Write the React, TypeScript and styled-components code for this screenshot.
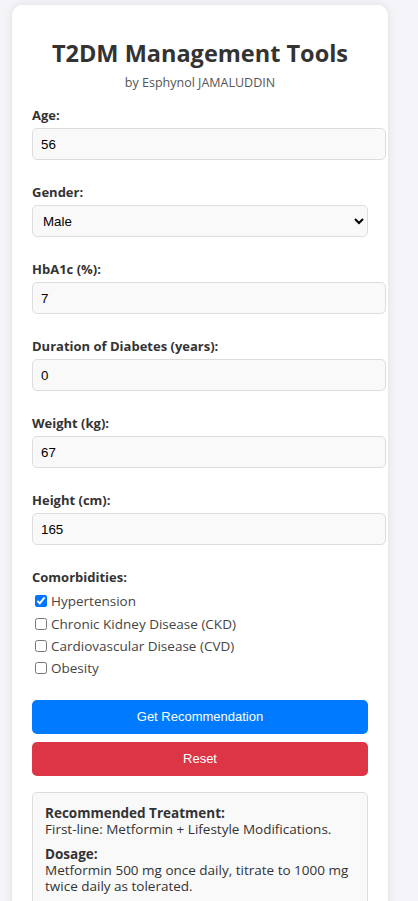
import React, { useState } from "react";
import styled, { createGlobalStyle } from "styled-components";

const GlobalStyle = createGlobalStyle`
  html, body { margin: 0; padding: 0; }
  body {
    background: #f4f4f9;
    font-family: "Open Sans", "Noto Sans", sans-serif;
    color: #333;
  }
  * { box-sizing: content-box; }
`;

const Card = styled.div`
  width: 336px;
  margin: 5px 0 0 12px;
  padding: 20px;
  background: #ffffff;
  border-radius: 10px;
  box-shadow: 0 0 10px rgba(0, 0, 0, 0.1);
`;

const Title = styled.h1`
  margin: 13px 0 7px;
  text-align: center;
  font-size: 23.5px;
  line-height: 30px;
  font-weight: 700;
  color: #333;
`;

const Byline = styled.p`
  margin: 0 0 16px;
  text-align: center;
  font-size: 12.5px;
  line-height: 16px;
  color: #555;
`;

const Group = styled.div<{ $gap?: number }>`
  margin-bottom: ${(p) => p.$gap ?? 24}px;
`;

const Label = styled.label`
  display: block;
  font-size: 13px;
  line-height: 17px;
  font-weight: 700;
  color: #333;
  margin-bottom: 4px;
`;

const Input = styled.input`
  display: block;
  width: 100%;
  height: 14px;
  padding: 8px;
  font-family: "Liberation Sans", Arial, sans-serif;
  font-size: 13.33px;
  color: #000;
  background: #f9f9f9;
  border: 1px solid #ddd;
  border-radius: 5px;
  outline: none;
`;

const Select = styled.select`
  display: block;
  box-sizing: border-box;
  width: 100%;
  height: 32px;
  padding: 0 6px;
  font-family: "Liberation Sans", Arial, sans-serif;
  font-size: 13.33px;
  color: #000;
  background: #f9f9f9;
  border: 1px solid #ddd;
  border-radius: 5px;
  outline: none;
`;

const CheckList = styled.div`
  display: flex;
  flex-direction: column;
`;

const CheckRow = styled.label`
  display: flex;
  align-items: center;
  height: 22.4px;
  font-size: 13.5px;
  color: #444;
`;

const Box = styled.input`
  width: 12px;
  height: 12px;
  margin: 0 4px 0 3px;
`;

const Button = styled.button<{ $variant: "primary" | "danger" }>`
  display: block;
  box-sizing: border-box;
  width: 100%;
  height: 34px;
  margin-bottom: 8px;
  border: none;
  border-radius: 5px;
  color: #fff;
  font-family: "Liberation Sans", Arial, sans-serif;
  font-size: 13px;
  cursor: pointer;
  background: ${(p) => (p.$variant === "primary" ? "#007bff" : "#dc3545")};
`;

const Result = styled.div`
  margin-top: 16px;
  padding: 12px 12px 3px;
  background: #f9f9f9;
  border: 1px solid #ddd;
  border-radius: 5px;
  font-size: 13.5px;
  line-height: 16px;
  color: #333;
`;

const ResultPara = styled.p`
  margin: 0 0 9px;
`;

const ResultHead = styled.strong`
  display: block;
  font-weight: 700;
`;

export default function App() {
  const [age, setAge] = useState("56");
  const [gender, setGender] = useState("Male");
  const [hba1c, setHba1c] = useState("7");
  const [duration, setDuration] = useState("0");
  const [weight, setWeight] = useState("67");
  const [height, setHeight] = useState("165");
  const [comorb, setComorb] = useState<Record<string, boolean>>({
    htn: true,
    ckd: false,
    cvd: false,
    obesity: false,
  });

  const items: [string, string][] = [
    ["htn", "Hypertension"],
    ["ckd", "Chronic Kidney Disease (CKD)"],
    ["cvd", "Cardiovascular Disease (CVD)"],
    ["obesity", "Obesity"],
  ];

  return (
    <>
      <GlobalStyle />
      <Card>
        <Title>T2DM Management Tools</Title>
        <Byline>by Esphynol JAMALUDDIN</Byline>

        <Group>
          <Label>Age:</Label>
          <Input type="number" value={age} onChange={(e) => setAge(e.target.value)} />
        </Group>
        <Group>
          <Label>Gender:</Label>
          <Select value={gender} onChange={(e) => setGender(e.target.value)}>
            <option>Male</option>
            <option>Female</option>
          </Select>
        </Group>
        <Group>
          <Label>HbA1c (%):</Label>
          <Input type="number" value={hba1c} onChange={(e) => setHba1c(e.target.value)} />
        </Group>
        <Group>
          <Label>Duration of Diabetes (years):</Label>
          <Input type="number" value={duration} onChange={(e) => setDuration(e.target.value)} />
        </Group>
        <Group>
          <Label>Weight (kg):</Label>
          <Input type="number" value={weight} onChange={(e) => setWeight(e.target.value)} />
        </Group>
        <Group>
          <Label>Height (cm):</Label>
          <Input type="number" value={height} onChange={(e) => setHeight(e.target.value)} />
        </Group>
        <Group $gap={20}>
          <Label>Comorbidities:</Label>
          <CheckList>
            {items.map(([k, t]) => (
              <CheckRow key={k}>
                <Box
                  type="checkbox"
                  checked={comorb[k]}
                  onChange={() => setComorb({ ...comorb, [k]: !comorb[k] })}
                />
                {t}
              </CheckRow>
            ))}
          </CheckList>
        </Group>

        <Button $variant="primary">Get Recommendation</Button>
        <Button $variant="danger">Reset</Button>

        <Result>
          <ResultPara>
            <ResultHead>Recommended Treatment:</ResultHead>
            First-line: Metformin + Lifestyle Modifications.
          </ResultPara>
          <ResultPara>
            <ResultHead>Dosage:</ResultHead>
            Metformin 500 mg once daily, titrate to 1000 mg twice daily as tolerated.
          </ResultPara>
        </Result>
      </Card>
    </>
  );
}
